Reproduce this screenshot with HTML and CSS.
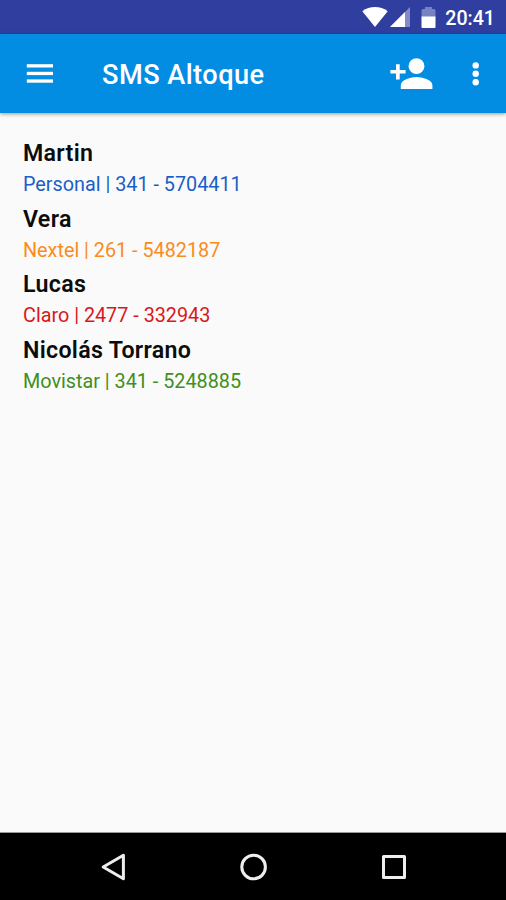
FILE: index.html
```html
<!DOCTYPE html>
<html lang="en">
<head>
    <meta charset="UTF-8">
    <meta name="viewport" content="width=device-width, initial-scale=1.0">
    <title>SMS Altoque</title>
    <link rel="stylesheet" href="styles.css">
</head>
<body>
    <!-- Status bar -->
    <div class="status-bar">
        <svg class="wifi" width="26" height="20" viewBox="0 0 26 20">
            <path d="M13 20L0.3 4.2Q6 0 13 0T25.7 4.2Z" fill="#fff"/>
        </svg>
        <svg class="signal" width="20" height="20" viewBox="0 0 20 20">
            <path d="M0 20L20 0V20Z" fill="#fff" opacity="0.4"/>
            <path d="M0 20L15 5V20Z" fill="#fff"/>
        </svg>
        <svg class="battery" width="15" height="21" viewBox="0 0 15 21">
            <path d="M0.5 10V3.5Q0.5 2 2 2H4V0H11V2H13Q14.5 2 14.5 3.5V10Z" fill="#fff" opacity="0.35"/>
            <path d="M0.5 9.5H14.5V20Q14.5 21 13.5 21H1.5Q0.5 21 0.5 20Z" fill="#fff"/>
        </svg>
        <span class="clock">20:41</span>
    </div>

    <!-- Toolbar -->
    <header class="toolbar">
        <svg class="menu" width="28" height="20" viewBox="0 0 28 20" fill="#fff">
            <rect x="0.8" y="0.2" width="26.2" height="3.3"/>
            <rect x="0.8" y="7.8" width="26.2" height="3.3"/>
            <rect x="0.8" y="15.4" width="26.2" height="3.3"/>
        </svg>
        <h1 class="title">SMS Altoque</h1>
        <svg class="add-contact" width="43" height="32" viewBox="0 0 43 32" fill="#fff">
            <circle cx="26.5" cy="8.2" r="7.9"/>
            <path d="M10.8 31V27C10.8 21.8 21.2 19 26.5 19S42.4 21.8 42.4 27V31Z"/>
            <path d="M6 6.2H9.7V12H15.6V15.6H9.7V21.6H6V15.6H0.4V12H6Z"/>
        </svg>
        <svg class="more" width="8" height="24" viewBox="0 0 8 24" fill="#fff">
            <circle cx="3.7" cy="3.4" r="3.2"/>
            <circle cx="3.7" cy="11.8" r="3.2"/>
            <circle cx="3.7" cy="20.2" r="3.2"/>
        </svg>
    </header>

    <!-- Contacts -->
    <main class="contacts">
        <div class="contact">
            <div class="name">Martin</div>
            <div class="phone personal">Personal | 341 - 5704411</div>
        </div>
        <div class="contact">
            <div class="name">Vera</div>
            <div class="phone nextel">Nextel | 261 - 5482187</div>
        </div>
        <div class="contact">
            <div class="name">Lucas</div>
            <div class="phone claro">Claro | 2477 - 332943</div>
        </div>
        <div class="contact">
            <div class="name">Nicolás Torrano</div>
            <div class="phone movistar">Movistar | 341 - 5248885</div>
        </div>
    </main>

    <!-- Navigation bar -->
    <nav class="nav-bar">
        <svg width="28" height="28" viewBox="0 0 28 28">
            <path d="M3.2 14L23.4 2.2V25.8Z"/>
        </svg>
        <svg width="28" height="28" viewBox="0 0 28 28">
            <circle cx="13.6" cy="14" r="11.8"/>
        </svg>
        <svg width="28" height="28" viewBox="0 0 28 28">
            <rect x="3.5" y="3.5" width="21" height="21"/>
        </svg>
    </nav>
</body>
</html>
```

FILE: styles.css
```css
/* General Styles */
* {
    box-sizing: border-box;
}

body {
    margin: 0;
    height: 100vh;
    display: flex;
    flex-direction: column;
    background-color: #fafafa;
    font-family: Roboto, sans-serif;
    overflow: hidden;
}

svg {
    display: block;
    flex: none;
}

/* Status bar */
.status-bar {
    height: 34px;
    flex: none;
    display: flex;
    align-items: center;
    justify-content: flex-end;
    padding-right: 11px;
    background-color: #303f9f;
    color: white;
}

.signal {
    margin-left: 2px;
}

.battery {
    margin-left: 11px;
}

.clock {
    margin-left: 9px;
    font-size: 19.6px;
    font-weight: 500;
    line-height: 34px;
    padding-top: 4px;
}

/* Toolbar */
.toolbar {
    height: 79px;
    flex: none;
    display: flex;
    align-items: center;
    padding: 0 26px;
    background-color: #038de2;
    color: white;
    box-shadow: 0 1px 4px rgba(0, 0, 0, 0.4);
}

.title {
    flex: 1;
    margin: 3px 0 0 48px;
    font-size: 27.2px;
    font-weight: 500;
    letter-spacing: 0.45px;
}

.more {
    margin-left: 39px;
}

/* Contacts */
.contacts {
    flex: 1;
    padding: 25px 23px 0;
}

.contact {
    height: 65.6px;
}

.name {
    font-size: 23.2px;
    font-weight: 600;
    letter-spacing: 0.3px;
    line-height: 31px;
    color: #0c0c0c;
}

.phone {
    font-size: 19.8px;
    line-height: 31px;
}

.personal {
    color: #1a5fc8;
}

.nextel {
    color: #fb8c1c;
}

.claro {
    color: #d8181c;
}

.movistar {
    color: #3f8f22;
}

/* Navigation bar */
.nav-bar {
    height: 68px;
    flex: none;
    display: flex;
    align-items: center;
    justify-content: center;
    gap: 112px;
    padding-left: 2px;
    border-top: 1px solid #999;
    background-color: #000;
}

.nav-bar svg {
    fill: none;
    stroke: #eee;
    stroke-width: 3;
    stroke-linejoin: round;
}
```
